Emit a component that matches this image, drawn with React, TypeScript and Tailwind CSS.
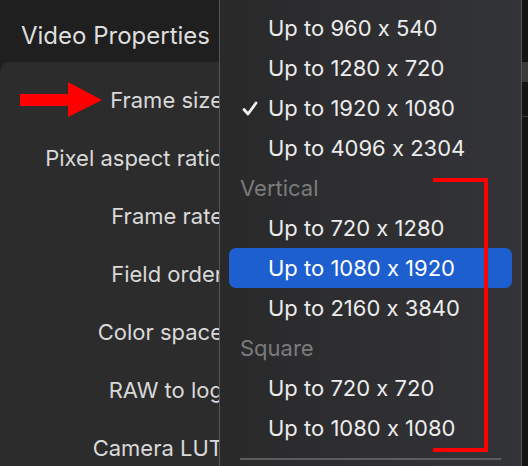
import { useState } from 'react';

const LABELS = ['Frame size', 'Pixel aspect ratio', 'Frame rate', 'Field order', 'Color space', 'RAW to log', 'Camera LUT'];

type Row = { kind: 'item' | 'header'; text: string; checked?: boolean; active?: boolean };

const ROWS: Row[] = [
  { kind: 'item', text: 'Up to 960 x 540' },
  { kind: 'item', text: 'Up to 1280 x 720' },
  { kind: 'item', text: 'Up to 1920 x 1080', checked: true },
  { kind: 'item', text: 'Up to 4096 x 2304' },
  { kind: 'header', text: 'Vertical' },
  { kind: 'item', text: 'Up to 720 x 1280' },
  { kind: 'item', text: 'Up to 1080 x 1920', active: true },
  { kind: 'item', text: 'Up to 2160 x 3840' },
  { kind: 'header', text: 'Square' },
  { kind: 'item', text: 'Up to 720 x 720' },
  { kind: 'item', text: 'Up to 1080 x 1080' },
];

export default function App() {
  const [hover, setHover] = useState(6);

  return (
    <div className="relative w-[528px] h-[466px] overflow-hidden bg-[#1f1f1f] font-['Inter',sans-serif] [font-feature-settings:'calt'_0]">
      {/* Inspector */}
      <div className="flex flex-col w-[230px] h-full">
        <div className="h-[62px] shrink-0 flex items-center pl-[21px] pt-[10px] text-[24px] text-[#dedede] whitespace-nowrap">
          Video Properties
        </div>
        <div className="flex-1 min-h-0 overflow-hidden bg-[#2c2c2c] rounded-tl-[10px] pt-[9px] pr-[7px] flex flex-col">
          {LABELS.map(l => (
            <div key={l} className="h-[58px] shrink-0 flex items-center justify-end text-[22px] text-[#d9d9d9] whitespace-nowrap">
              {l}
            </div>
          ))}
        </div>
      </div>

      {/* Right-hand sliver of the next panel */}
      <div className="absolute left-[521px] top-0 w-[7px] h-full bg-[#141414] flex flex-col">
        <div className="h-[62px]" />
        <div className="h-[20px] bg-[#3a3a3a]" />
        <div className="h-[34px]" />
        <div className="h-[1px] bg-[#3a3a3a]" />
      </div>

      {/* Popup menu */}
      <div className="absolute left-[219px] top-0 w-[303px] h-full border-x border-[#555557] bg-gradient-to-r from-[#29292a] to-[#333438] pt-[8px] px-[9px]">
        {ROWS.map((r, i) =>
          r.kind === 'header' ? (
            <div key={r.text} className="h-[40px] flex items-center pl-[11px] text-[22px] text-[#7b7b7d]">
              {r.text}
            </div>
          ) : (
            <div
              key={r.text}
              onMouseEnter={() => setHover(i)}
              className={`relative h-[40px] flex items-center pl-[39px] rounded-[7px] text-[22px] whitespace-nowrap ${
                hover === i ? 'bg-[#1e5fcf] text-white' : 'text-[#ececec]'
              }`}
            >
              {r.checked && (
                <svg className="absolute left-[13px] top-[13px]" width="16" height="15" viewBox="0 0 16 15">
                  <path d="M2 8.5 L6 13 L14 2" fill="none" stroke="#f2f2f2" strokeWidth="2.8" strokeLinecap="round" strokeLinejoin="round" />
                </svg>
              )}
              {r.text}
            </div>
          )
        )}
        <div className="mt-[10px] mx-[11px] h-[2px] bg-[#5c5c5e]" />
      </div>

      {/* Annotations */}
      <svg className="absolute left-[20px] top-[82px]" width="84" height="36" viewBox="0 0 84 36">
        <polygon points="0,12 48,12 48,0 82,18 48,35 48,24 0,24" fill="#ff0000" />
      </svg>
      <div className="absolute left-[433px] top-[178px] w-[55px] h-[274px] border-y-4 border-r-4 border-[#ff0000]" />
    </div>
  );
}
